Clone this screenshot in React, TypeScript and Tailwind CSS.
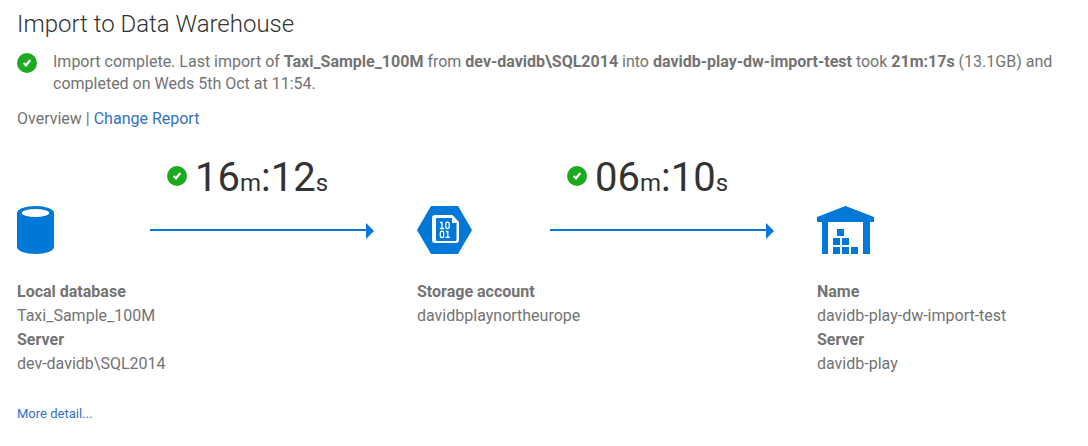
import type { ReactNode } from "react";

function CheckBadge() {
  return (
    <svg className="size-5 shrink-0" viewBox="0 0 20 20" role="img" aria-label="Completed">
      <circle cx="10" cy="10" r="10" fill="#1cab20" />
      <path d="M6.700 10 9 12.300 13.300 7" fill="none" stroke="#fff" strokeWidth="2.200" />
    </svg>
  );
}

function DatabaseIcon() {
  return (
    <svg className="h-12 w-[37px]" viewBox="0 0 37 48" aria-hidden="true">
      <path d="M0 7C0 3 8.300 0 18.500 0S37 3 37 7v34c0 4-8.300 7-18.500 7S0 45 0 41z" fill="#0078d7" />
      <ellipse cx="18.500" cy="7" rx="13.700" ry="4" fill="#fff" />
    </svg>
  );
}

function StorageIcon() {
  return (
    <svg className="h-12 w-[55px]" viewBox="0 0 55 48" aria-hidden="true">
      <path d="M14 0h27l14 24-14 24H14L0 24z" fill="#0078d7" />
      <path
        fillRule="evenodd"
        d="M18 9h17.500l6.500 7v18a3 3 0 0 1-3 3H18a3 3 0 0 1-3-3V12a3 3 0 0 1 3-3zM20 12a1 1 0 0 0-1 1v20.500a1.500 1.500 0 0 0 1.500 1.500h17.500a1.500 1.500 0 0 0 1.500-1.500V17H35v-5z"
        fill="#fff"
      />
      <g fill="none" stroke="#fff" strokeWidth="1.300">
        <path d="M23 16.500h2v6M22.800 22.500h4.400M28.500 31.300h4.400M28.800 25.500h2v6" />
        <rect x="28.800" y="16.100" width="3.400" height="6.400" rx="1.600" />
        <rect x="23.300" y="25.100" width="3.400" height="6.400" rx="1.600" />
      </g>
    </svg>
  );
}

function WarehouseIcon() {
  return (
    <svg className="h-12 w-[57px]" viewBox="0 0 57 48" fill="#0078d7" aria-hidden="true">
      <path d="M0 11 28.500 0 57 11v5h-4v32h-7V16H11v32H5V16H0z" />
      <path d="M20 23h7v7h-7zM16 32h7v7h-7zM25 32h7v7h-7zM16 41h7v7h-7zM25 41h7v7h-7zM34 41h7v7h-7z" />
    </svg>
  );
}

function Transfer({ minutes, seconds }: { minutes: string; seconds: string }) {
  return (
    <div className="mr-[43px] flex-1">
      <div className="flex h-[71px] items-start gap-2 pl-[17px]">
        <div className="pt-3.5">
          <CheckBadge />
        </div>
        <p className="pt-0.5 text-[40px] leading-[48px] whitespace-nowrap text-[#333]">
          {minutes}
          <span className="text-2xl leading-none">m</span>:{seconds}
          <span className="text-2xl leading-none">s</span>
        </p>
      </div>
      <div className="flex items-start" aria-hidden="true">
        <div className="mt-1.5 h-0.5 flex-1 bg-[#0078d7]" />
        <svg className="h-4 w-2" viewBox="0 0 8 16">
          <path d="M0 0 8 8 0 16z" fill="#0078d7" />
        </svg>
      </div>
    </div>
  );
}

function Stage({
  icon,
  details,
  transfer,
}: {
  icon: ReactNode;
  details: [string, string][];
  transfer?: ReactNode;
}) {
  return (
    <section>
      <div className="flex h-[102px]">
        <div className="flex w-[133px] shrink-0 items-end">{icon}</div>
        {transfer}
      </div>
      <dl className="mt-[26px] leading-6">
        {details.map(([label, value]) => (
          <div key={label}>
            <dt className="font-bold">{label}</dt>
            <dd>{value}</dd>
          </div>
        ))}
      </dl>
    </section>
  );
}

export default function App() {
  return (
    <main className="bg-white pt-2 pb-6 pl-[17px] font-[Roboto,sans-serif] text-base text-[#737373]">
      <h1 className="text-2xl leading-8 font-light text-[#333]">Import to Data Warehouse</h1>
      <div className="mt-[11px] flex gap-4 pr-6">
        <div className="pt-0.5">
          <CheckBadge />
        </div>
        <p className="leading-[22px]">
          Import complete. Last import of <b>Taxi_Sample_100M</b> from <b>dev-davidb\SQL2014</b> into{" "}
          <b>davidb-play-dw-import-test</b> took <b>21m:17s</b> (13.1GB) and completed on Weds 5th Oct at
          11:54.
        </p>
      </div>
      <nav className="mt-3 leading-6">
        Overview |{" "}
        <a href="#change-report" className="text-[#3272c4]">
          Change Report
        </a>
      </nav>
      <div className="mt-[21px] grid grid-cols-[400fr_400fr_271fr]">
        <Stage
          icon={<DatabaseIcon />}
          details={[
            ["Local database", "Taxi_Sample_100M"],
            ["Server", "dev-davidb\\SQL2014"],
          ]}
          transfer={<Transfer minutes="16" seconds="12" />}
        />
        <Stage
          icon={<StorageIcon />}
          details={[["Storage account", "davidbplaynortheurope"]]}
          transfer={<Transfer minutes="06" seconds="10" />}
        />
        <Stage
          icon={<WarehouseIcon />}
          details={[
            ["Name", "davidb-play-dw-import-test"],
            ["Server", "davidb-play"],
          ]}
        />
      </div>
      <a href="#more-detail" className="mt-7 inline-block text-[13px] leading-5 text-[#3272c4]">
        More detail...
      </a>
    </main>
  );
}
